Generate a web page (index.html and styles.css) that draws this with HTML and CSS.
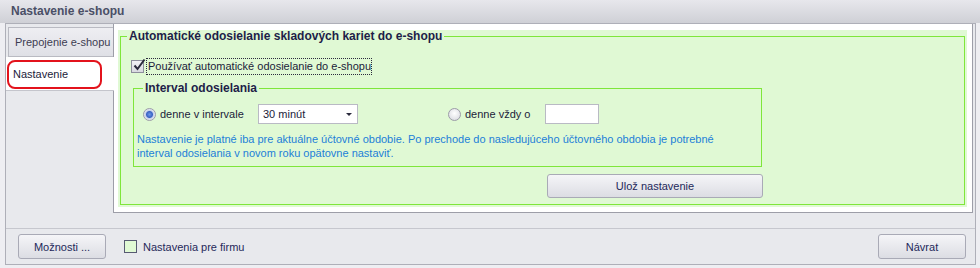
FILE: index.html
```html
<!DOCTYPE html>
<html>

<head>
    <meta charset="utf-8">
    <title>Nastavenie e-shopu</title>
    <link rel="stylesheet" href="styles.css">
</head>

<body>
    <div class="window">
        <div class="titlebar">Nastavenie e-shopu</div>
        <div class="frame">
            <div class="main">
                <div class="tabs">
                    <div class="tab">Prepojenie e-shopu</div>
                    <div class="tab active">Nastavenie<span class="mark"></span></div>
                </div>
                <div class="panel">
                    <div class="green">
                        <fieldset class="group outer">
                            <legend>Automatické odosielanie skladových kariet do e-shopu</legend>
                            <div class="outer-body">
                                <label class="check">
                                    <span class="box">
                                        <svg width="15" height="15" viewBox="0 0 15 15">
                                            <path d="M2.5 7.5 L5.5 11 L12.5 1.5" fill="none" stroke="#2a2a3c" stroke-width="2"/>
                                        </svg>
                                    </span>
                                    <span class="focus">Používať automatické odosielanie do e-shopu</span>
                                </label>
                                <fieldset class="group inner">
                                    <legend>Interval odosielania</legend>
                                    <div class="row">
                                        <span class="radio on"></span>
                                        <span class="opt1">denne v intervale</span>
                                        <span class="select">30 minút<span class="arrow"></span></span>
                                        <span class="radio"></span>
                                        <span class="opt2">denne vždy o</span>
                                        <span class="textbox"></span>
                                    </div>
                                    <p class="note">Nastavenie je platné iba pre aktuálne účtovné obdobie. Po prechode do nasledujúceho účtovného obdobia je potrebné<br>interval odosielania v novom roku opätovne nastaviť.</p>
                                </fieldset>
                                <div class="actions">
                                    <button class="btn save">Ulož nastavenie</button>
                                </div>
                            </div>
                        </fieldset>
                    </div>
                </div>
            </div>
            <div class="footer">
                <button class="btn small">Možnosti ...</button>
                <label class="firm"><span class="firmbox"></span>Nastavenia pre firmu</label>
                <button class="btn small back">Návrat</button>
            </div>
        </div>
    </div>
</body>

</html>
```

FILE: styles.css
```css
body {
    margin: 0;
    font-family: "Liberation Sans", Arial, sans-serif;
    font-size: 11px;
    color: #1c1c3a;
}

.window {
    width: 980px;
    height: 268px;
    background: #eeeef2;
    overflow: hidden;
}

.titlebar {
    height: 23px;
    box-sizing: border-box;
    padding-left: 11px;
    line-height: 22px;
    font-size: 12px;
    font-weight: bold;
    color: #4a4f66;
    background: linear-gradient(#e7e7ec, #cfd0d6);
}

.frame {
    margin: 0 4px 0 5px;
    height: 242px;
    box-sizing: border-box;
    border: 1px solid #aeafb8;
    background: #e8e9ed;
    display: flex;
    flex-direction: column;
}

.main {
    display: flex;
    height: 189px;
    padding-right: 2px;
}

.tabs {
    width: 107px;
    padding-top: 3px;
}

.tab {
    height: 30px;
    margin-left: 2px;
    box-sizing: border-box;
    border: 1px solid #b9bac2;
    border-right: none;
    background: linear-gradient(#eeeef2, #dfe0e6);
    color: #3c3c52;
    padding-left: 6px;
    line-height: 29px;
}

.tab.active {
    position: relative;
    height: 34px;
    margin-left: 0;
    margin-right: -1px;
    padding-left: 7px;
    line-height: 34px;
    border: none;
    border-bottom: 1px solid #c4c5cc;
    background: #fff;
    color: #1c1c3a;
    z-index: 1;
}

.mark {
    position: absolute;
    left: 1px;
    top: 3px;
    width: 95px;
    height: 29px;
    box-sizing: border-box;
    border: 2px solid #e3131c;
    border-radius: 8px;
}

.panel {
    flex: 1;
    background: #fff;
    border: 1px solid #9d9ea8;
    border-top: none;
    padding: 6px 5px 5px 4px;
}

.green {
    background: #e0f9d4;
    height: 177px;
    box-sizing: border-box;
    padding: 0 2px 2px 2px;
}

.group {
    margin: 0;
    padding: 0;
    border: 1px solid #7fe63a;
}

.group legend {
    font-size: 12px;
    font-weight: bold;
    line-height: 12px;
    color: #1e1e48;
    padding: 0 2px;
}

.outer {
    height: 175px;
    box-sizing: border-box;
}

.outer legend {
    margin-left: 6px;
}

.outer-body {
    padding: 16px 0 0 12px;
}

.check {
    display: flex;
    align-items: center;
    height: 17px;
    margin-left: -2px;
}

.box {
    width: 13px;
    height: 13px;
    box-sizing: border-box;
    border: 1px solid #8d8e9c;
    background: linear-gradient(#f2f2f6, #d8d9e0);
    position: relative;
    margin-right: 2px;
}

.box svg {
    position: absolute;
    left: 0;
    top: -3px;
}

.focus {
    border: 1px dotted #2a2a3c;
    padding: 1px 0 1px 1px;
    line-height: 13px;
}

.inner {
    width: 629px;
    height: 85px;
    box-sizing: border-box;
    margin-top: 7px;
}

.inner legend {
    margin-left: 9px;
}

.row {
    display: flex;
    align-items: center;
    height: 20px;
    margin-top: 10px;
    padding-left: 9px;
}

.radio {
    width: 13px;
    height: 13px;
    box-sizing: border-box;
    border-radius: 50%;
    border: 1px solid #9c9ca8;
    background: radial-gradient(circle at 50% 40%, #ffffff, #d4d5dc);
    margin-right: 4px;
}

.radio.on {
    background: radial-gradient(circle, #6f98e8 0, #3a63c4 3px, #c7d1ea 4px, #eef0f6 6px);
}

.opt1 {
    width: 98px;
}

.select {
    width: 100px;
    height: 20px;
    box-sizing: border-box;
    border: 1px solid #b9bac4;
    background: #fff;
    padding-left: 4px;
    line-height: 18px;
    display: flex;
    justify-content: space-between;
    align-items: center;
    margin-right: 90px;
}

.arrow {
    width: 0;
    height: 0;
    border-left: 3px solid transparent;
    border-right: 3px solid transparent;
    border-top: 3px solid #2a2a3c;
    margin-right: 5px;
}

.opt2 {
    width: 80px;
}

.textbox {
    width: 54px;
    height: 20px;
    box-sizing: border-box;
    border: 1px solid #b9bac4;
    background: #fff;
}

.note {
    margin: 8px 0 0 3px;
    color: #1d7fd8;
    line-height: 14px;
}

.actions {
    width: 629px;
    display: flex;
    justify-content: flex-end;
    margin-top: 7px;
}

.btn {
    font-family: "Liberation Sans", Arial, sans-serif;
    font-size: 11px;
    color: #23285a;
    border: 1px solid #a9aab6;
    border-radius: 3px;
    background: linear-gradient(#f5f5f8, #dcdde3);
    padding: 0;
}

.save {
    width: 216px;
    height: 24px;
    margin-right: -1px;
}

.footer {
    flex: 1;
    border-top: 1px solid #c6c7ce;
    margin-top: 15px;
    display: flex;
    align-items: flex-start;
    padding: 5px 9px 0 12px;
}

.small {
    width: 88px;
    height: 25px;
}

.firm {
    display: flex;
    align-items: center;
    margin-left: 18px;
    margin-top: 6px;
    color: #26285a;
}

.firmbox {
    width: 13px;
    height: 13px;
    box-sizing: border-box;
    border: 1px solid #575a72;
    background: #e0f9d4;
    margin-right: 6px;
}

.back {
    margin-left: auto;
}
```
